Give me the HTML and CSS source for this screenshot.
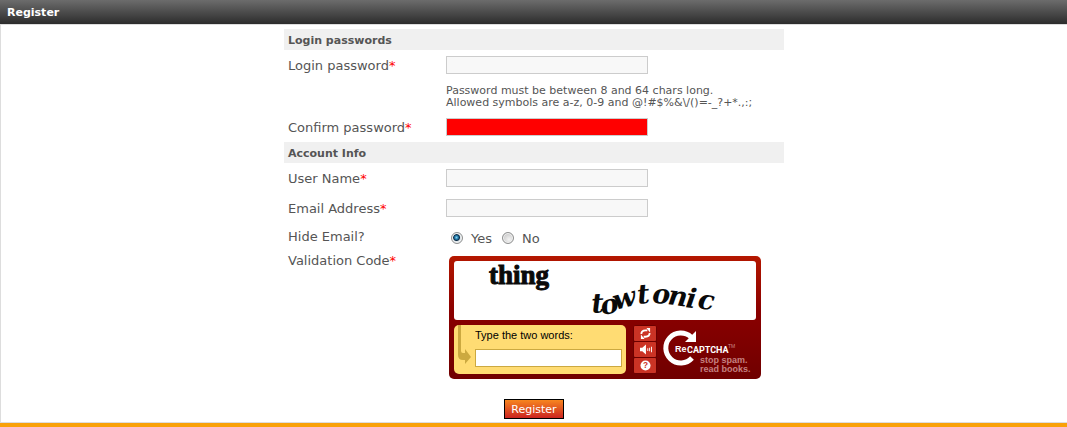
FILE: index.html
```html
<!DOCTYPE html>
<html lang="en">
<head>
<meta charset="utf-8">
<title>Register</title>
<link rel="stylesheet" href="styles.css">
</head>
<body>
<main class="panel">
  <h1 class="panel-title">Register</h1>
  <form class="form">
    <h2 class="section">Login passwords</h2>
    <div class="row">
      <label class="name" for="password">Login password<span class="required">*</span></label>
      <input class="field" id="password" type="password">
    </div>
    <p class="hint">Password must be between 8 and 64 chars long.<br>Allowed symbols are a-z, 0-9 and @!#$%&amp;\/()=-_?+*.,:;</p>
    <div class="row">
      <label class="name" for="confirm">Confirm password<span class="required">*</span></label>
      <input class="field field-error" id="confirm" type="password">
    </div>
    <h2 class="section">Account Info</h2>
    <div class="row">
      <label class="name" for="username">User Name<span class="required">*</span></label>
      <input class="field" id="username" type="text">
    </div>
    <div class="row">
      <label class="name" for="email">Email Address<span class="required">*</span></label>
      <input class="field" id="email" type="text">
    </div>
    <div class="row row-short" role="radiogroup" aria-labelledby="hide-label">
      <span id="hide-label">Hide Email?</span>
      <div class="choices">
        <input class="radio" type="radio" name="hide" id="hide-yes" checked><label for="hide-yes">Yes</label>
        <input class="radio" type="radio" name="hide" id="hide-no"><label for="hide-no">No</label>
      </div>
    </div>
    <div class="row row-captcha">
      <label for="captcha">Validation Code<span class="required">*</span></label>
      <div class="captcha">
        <svg class="challenge" viewBox="0 0 302 59">
          <text class="word" x="35" y="23">thing</text>
          <text class="word-wavy" x="138 148 161 184 198 213 231 243" y="52 54 49 43 42 43 46 47" rotate="-4 -10 -14 -6 2 8 8 8">towtonic</text>
        </svg>
        <div class="captcha-tools">
          <div class="answer">
            <svg class="arrow" viewBox="0 0 14 42"><path d="M0 0h3v26q0 2 2 2h2v-4l6 8-6 7v-4H5q-5 0-5-5z"/></svg>
            <div class="answer-box">
              <label for="captcha">Type the two words:</label>
              <input class="answer-input" id="captcha" type="text">
            </div>
          </div>
          <div class="buttons">
            <button type="button" aria-label="New challenge"><svg viewBox="0 0 12 12"><path class="stroke" d="M1.500 6.500Q1.500 2.500 6 2.500H8M10.500 5.500Q10.500 9.500 6 9.500H4"/><path d="M7 0h4v5zM5 12H1V7z"/></svg></button>
            <button type="button" aria-label="Audio challenge"><svg viewBox="0 0 12 12"><path d="M0 4h2.500L6.500 .5v11L2.500 8H0zM8 4.500h1v3H8zM10 4h1v4h-1zM12 3h1v6h-1z"/></svg></button>
            <button type="button" aria-label="Help"><svg viewBox="0 0 12 12"><circle cx="6" cy="6" r="5.500"/><text class="question" x="6" y="9">?</text></svg></button>
          </div>
          <svg class="logo" viewBox="0 0 94 48">
            <path class="ring" d="M29 12A15 15 0 1 0 30 33"/>
            <path d="M34 6v11H23z"/>
            <text class="logo-re" x="13" y="27">Re</text>
            <text class="logo-name" x="25" y="28">CAPTCHA</text>
            <text class="logo-tm" x="66" y="23">TM</text>
            <text class="logo-tag" x="38" y="38">stop spam.</text>
            <text class="logo-tag" x="38" y="47">read books.</text>
          </svg>
        </div>
      </div>
    </div>
    <button class="submit" type="submit">Register</button>
  </form>
</main>
</body>
</html>
```
FILE: styles.css
```css
* { box-sizing: border-box; }
body {
  margin: 0;
  background: #fff;
  color: #555;
  font: 13px/20px Verdana, "DejaVu Sans", sans-serif;
}
.panel { border-bottom: 4px solid #f9a109; }
.panel-title {
  margin: 0;
  padding: 1px 7px 0;
  background: linear-gradient(#6c6c6c, #2c2c2c);
  color: #fff;
  font-size: 11px;
  line-height: 23px;
}
.form {
  display: flex;
  flex-direction: column;
  align-items: center;
  padding: 4px 0 3px;
  border: 1px solid #ddd;
  border-right: 0;
}
.section, .row, .hint { width: 100%; max-width: 500px; margin: 0; }
.section {
  padding: 2px 4px 0;
  background: #f0f0f0;
  font-size: 11px;
  line-height: 19px;
}
.row {
  display: grid;
  grid-template-columns: 158px 1fr;
  align-items: center;
  min-height: 30px;
  padding-left: 4px;
}
.name { padding-top: 2px; }
.row-short { min-height: 27px; }
.row-captcha { align-items: start; }
.row-captcha > label { padding-top: 1px; }
.required { color: #f00; }
.field {
  width: 202px;
  height: 18px;
  border: 1px solid #ccc;
  background: #f8f8f8;
}
.field-error { background: #f00; }
.hint {
  padding: 5px 0 3px 162px;
  font-size: 11px;
  line-height: 12px;
}
.choices { display: flex; align-items: center; padding: 2px 0 0 5px; }
.choices label { margin: 0 10px 0 8px; padding-top: 2px; }
.radio {
  appearance: none;
  width: 12px;
  height: 12px;
  margin: 0;
  border: 1px solid #8e8f8f;
  border-radius: 50%;
  background: radial-gradient(circle at 60% 65%, #f4f4f4, #bbb);
  box-shadow: inset 0 0 0 1px #f4f4f4;
}
.radio:checked { background: radial-gradient(circle at 45% 45%, #7fd4f5 0, #1b6d9c 2px, #0b2b45 3px, #dde4e8 4px); }
.captcha {
  width: 312px;
  margin: 6px 0 6px 3px;
  padding: 5px;
  border-radius: 5px;
  background: linear-gradient(#b41700, #8a0000 45%, #700000);
}
.challenge {
  display: block;
  width: 302px;
  height: 59px;
  border-radius: 3px;
  background: #fff;
}
.word { font: bold 27px "Liberation Serif", serif; fill: #0a0a0a; stroke: #0a0a0a; }
.word-wavy { font: italic bold 27px "DejaVu Serif", serif; fill: #0a0a0a; }
.captcha-tools { display: flex; padding-top: 5px; }
.answer {
  display: flex;
  width: 172px;
  height: 49px;
  padding: 0 4px;
  border-radius: 5px;
  background: #ffdc73;
}
.arrow { width: 14px; height: 42px; fill: #cca940; }
.answer-box {
  display: flex;
  flex-direction: column;
  gap: 4px;
  padding-left: 3px;
  color: #000;
  font: 11px/20px Arial, "Liberation Sans", sans-serif;
}
.answer-input {
  width: 147px;
  height: 18px;
  border: 1px solid #cca940;
  background: #fff;
}
.buttons {
  display: flex;
  flex-direction: column;
  gap: 1px;
  width: 25px;
  height: 49px;
  margin: 0 5px 0 7px;
  padding: 1px;
  border-radius: 4px;
  background: #6b0000;
  overflow: hidden;
}
.buttons button {
  display: grid;
  flex: 1;
  place-items: center;
  padding: 0;
  border: 0;
  border-radius: 1px;
  background: #cb3325;
}
.buttons svg { width: 11px; height: 11px; fill: #fff; overflow: visible; }
.buttons .stroke { fill: none; stroke: #fff; stroke-width: 2; }
.question { font: bold 9px "Liberation Sans", sans-serif; fill: #cb3325; text-anchor: middle; }
.logo { width: 94px; height: 48px; fill: #fff; overflow: visible; }
.ring { fill: none; stroke: #fff; stroke-width: 5; }
.logo-re { font: bold 9px "Liberation Sans", sans-serif; }
.logo-name { font: bold 9px Roboto, sans-serif; }
.logo-tm { font: 5px "Liberation Sans", sans-serif; fill: #c88; }
.logo-tag { font: bold 9px "Liberation Sans", sans-serif; fill: #c58080; }
.submit {
  width: 60px;
  height: 20px;
  margin-top: 14px;
  padding: 1px 0 0;
  border: 1px solid #000;
  background: linear-gradient(#f7851f, #cb2420);
  color: #fff;
  font: 11px/17px Verdana, "DejaVu Sans", sans-serif;
}
```
